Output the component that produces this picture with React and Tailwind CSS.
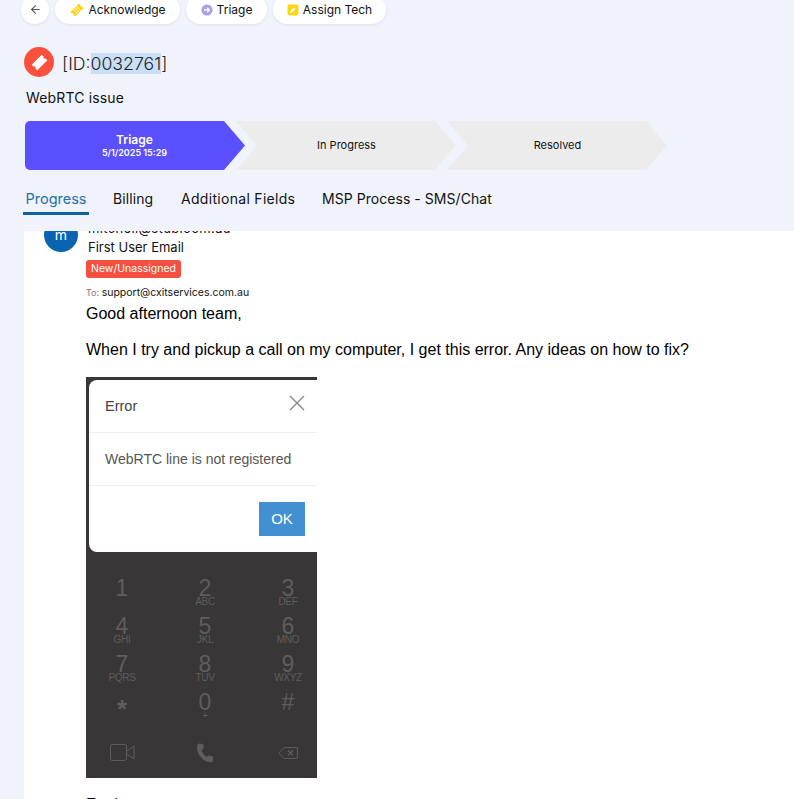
import React from 'react';
import { ArrowLeft, Phone } from 'lucide-react';

const TicketShape = ({ className, stripes }) => (
  <svg viewBox="0 0 24 24" className={className}>
    <g transform="rotate(-45 12 12)">
      <path
        fill="currentColor"
        d="M3 7h18v3.2a1.9 1.9 0 0 0 0 3.6V17H3v-3.2a1.9 1.9 0 0 0 0-3.6z"
      />
      {stripes && (
        <path d="M9 7v10M12 7v10M15 7v10" stroke="#fff" strokeWidth="1" fill="none" />
      )}
    </g>
  </svg>
);

const TriageIcon = () => (
  <svg viewBox="0 0 12 12" className="w-[12px] h-[12px]">
    <circle cx="6" cy="6" r="5.6" fill="#a99ff0" />
    <path d="M3 6h5.4M6.2 3.8 8.4 6 6.2 8.2" stroke="#fff" strokeWidth="1.3" fill="none" />
  </svg>
);

const PencilIcon = () => (
  <svg viewBox="0 0 12 12" className="w-[12px] h-[12px]">
    <rect x="0.5" y="0.5" width="11" height="11" rx="2" fill="#fdd60f" />
    <path d="M3 9l.5-2 3.6-3.6 1.5 1.5L5 8.5z" fill="#fff" />
  </svg>
);

const actions = [
  { label: 'Acknowledge', icon: <TicketShape className="w-[16px] h-[16px] text-[#fbd51d]" stripes />, width: 'w-[125px]', gap: 'gap-[3px]' },
  { label: 'Triage', icon: <TriageIcon />, width: 'w-[81px]', gap: 'gap-[4px]' },
  { label: 'Assign Tech', icon: <PencilIcon />, width: 'w-[113px]', gap: 'gap-[4px]' },
];

const steps = [
  { label: 'In Progress' },
  { label: 'Resolved' },
];

const tabs = [
  { label: 'Additional Fields', width: 'w-[114px]', spacing: 'tracking-[0.3px]' },
  { label: 'MSP Process - SMS/Chat', width: 'w-[171px]', spacing: 'tracking-[0.05px]' },
];

const keys = [
  ['1', ''], ['2', 'ABC'], ['3', 'DEF'],
  ['4', 'GHI'], ['5', 'JKL'], ['6', 'MNO'],
  ['7', 'PQRS'], ['8', 'TUV'], ['9', 'WXYZ'],
  ['*', ''], ['0', '+'], ['#', ''],
];

function ErrorShot() {
  return (
    <div className="w-[231px] h-[401px] bg-[#383636] pt-[3px] overflow-hidden font-['Liberation_Sans',sans-serif]">
      {/* error dialog, cropped on the right like the source image */}
      <div className="ml-[3px] w-[228px] h-[172px] bg-white rounded-l-[8px] text-[#444]">
        <div className="h-[53px] border-b border-[#eeeeee] pl-[16px] pr-[12px] flex items-center justify-between">
          <span className="text-[14.5px] mt-[-1px]">Error</span>
          <svg viewBox="0 0 16 16" className="w-[16px] h-[16px] mb-[6px]">
            <path d="M1 1l14 14M15 1 1 15" stroke="#888" strokeWidth="1.4" fill="none" />
          </svg>
        </div>
        <div className="h-[53px] border-b border-[#eeeeee] pl-[16px] flex items-center text-[14px] text-[#555]">
          WebRTC line is not registered
        </div>
        <div className="flex justify-end pt-[16px] pr-[12px]">
          <div className="w-[46px] h-[34px] bg-[#428fd1] text-white text-[15px] flex items-center justify-center">OK</div>
        </div>
      </div>

      {/* dial pad */}
      <div className="grid grid-cols-[60px_60px_60px] gap-x-[23px] auto-rows-[38px] pl-[6px] mt-[24px] text-[#5f5d5d] text-center">
        {keys.map(([digit, letters]) => (
          <div key={digit}>
            <div className={digit === '*' ? 'text-[26px] leading-[24px] font-bold mt-[7px]' : 'text-[23px] leading-[24px]'}>{digit}</div>
            <div className="text-[10px] leading-[12px] mt-[-4px] tracking-[-0.3px]">{letters}</div>
          </div>
        ))}
      </div>
      <div className="grid grid-cols-[60px_60px_60px] gap-x-[23px] pl-[6px] mt-[15px] text-[#5f5d5d]">
        <div className="flex justify-center pt-[1px]">
          <svg viewBox="0 0 25 17" className="w-[25px] h-[17px]" fill="none" stroke="currentColor" strokeWidth="1">
            <rect x="0.5" y="0.5" width="16" height="16" rx="2" />
            <path d="M17 7l7-5v13l-7-5" />
          </svg>
        </div>
        <div className="flex justify-center">
          <Phone className="w-[20px] h-[20px] rotate-[6deg]" fill="currentColor" strokeWidth={1} />
        </div>
        <div className="flex justify-center pt-[4px]">
          <svg viewBox="0 0 20 12" className="w-[20px] h-[12px]" fill="none" stroke="currentColor">
            <path d="M6 .6h13.4v10.8H6L.8 6z" />
            <path d="M10 3.5l5 5M15 3.5l-5 5" strokeWidth="1.3" />
          </svg>
        </div>
      </div>
    </div>
  );
}

export default function App() {
  return (
    <div className="h-[799px] overflow-hidden bg-[#f0f3fb] font-['Inter',sans-serif] text-[#111]">
      <div className="h-[231px] overflow-hidden">
        {/* Action bar */}
        <div className="flex items-center gap-[6px] pl-[21px] mt-[-5px] h-[29px]">
          <button className="w-[28px] h-[28px] rounded-full bg-white shadow-[0_1px_3px_rgba(0,0,0,0.08)] flex items-center justify-center text-[#555]">
            <ArrowLeft className="w-[13px] h-[13px]" />
          </button>
          {actions.map(({ label, icon, width, gap }) => (
            <button
              key={label}
              className={`${width} ${gap} h-[29px] rounded-full bg-white shadow-[0_1px_3px_rgba(0,0,0,0.08)] flex items-center justify-center text-[12px]`}
            >
              {icon}
              <span>{label}</span>
            </button>
          ))}
        </div>

        {/* Title */}
        <div className="flex items-center gap-[8px] ml-[24px] mt-[23px]">
          <div className="w-[30px] h-[30px] rounded-full bg-[#fa503d] flex items-center justify-center text-white">
            <TicketShape className="w-[19px] h-[19px]" />
          </div>
          <div className="text-[17.7px] leading-[22px] mt-[4px] text-[#222] font-light whitespace-nowrap">
            [ID:<span className="bg-[#c9dff8]">0032761</span>]
          </div>
        </div>
        <div className="ml-[26px] mt-[12px] text-[14px] leading-[18px] tracking-[0.15px]">WebRTC issue</div>

        {/* Status steps */}
        <div className="flex ml-[25px] mt-[14px]">
          <div className="w-[220px] h-[49px] bg-[#5a50ff] text-white rounded-l-[5px] [clip-path:polygon(0_0,199px_0,100%_50%,199px_100%,0_100%)] flex flex-col items-center justify-center font-semibold pr-[1px]">
            <span className="text-[12px] leading-[14px]">Triage</span>
            <span className="text-[9px] leading-[12px]">5/1/2025 15:29</span>
          </div>
          {steps.map(({ label }) => (
            <div
              key={label}
              className="w-[220px] h-[49px] ml-[-9px] bg-[#ececec] text-[11px] [clip-path:polygon(0_0,199px_0,100%_50%,199px_100%,0_100%,21px_50%)] flex items-center justify-center pl-[1px]"
            >
              {label}
            </div>
          ))}
        </div>

        {/* Tabs */}
        <div className="flex items-start ml-[23px] mt-[19px] text-[14px] leading-[20px]">
          <div className="w-[66px] h-[26px] border-b-[3px] border-[#0f60a0] text-[#1f70a8] text-center text-[14.5px]">Progress</div>
          <div className="ml-[24px] w-[41px] tracking-[0.1px]">Billing</div>
          {tabs.map(({ label, width, spacing }) => (
            <div key={label} className={`${width} ${spacing} ml-[27px] whitespace-nowrap`}>{label}</div>
          ))}
        </div>
      </div>

      {/* Message panel, scrolled so its first line is clipped */}
      <div className="ml-[24px] h-[568px] bg-white overflow-hidden">
        <div className="flex mt-[-13px] ml-[20px] gap-[8px]">
          <div className="w-[34px] h-[34px] rounded-full bg-[#0a64b0] text-white text-[14px] flex items-center justify-center shrink-0 pb-[2px]">m</div>
          <div className="min-w-0">
            <div className="ml-[2px] text-[13px] leading-[18px] mt-[1px] tracking-[0.35px]">mitchell@stubloom.au</div>
            <div className="ml-[2px] text-[13px] leading-[18px] mt-[1px]">First User Email</div>
            <div className="w-[95px] h-[18px] mt-[4px] rounded-[3px] bg-[#f44f3f] text-white text-[10.5px] flex items-center justify-center">New/Unassigned</div>
            <div className="mt-[8px] text-[10.5px] leading-[14px] whitespace-nowrap">
              <span className="text-[9px] text-[#8a6f6f]">To: </span>support@cxitservices.com.au
            </div>
          </div>
        </div>
        <div className="ml-[62px] mt-[5px] text-[16px] leading-[18px] text-black font-['Liberation_Sans',sans-serif]">
          <p>Good afternoon team,</p>
          <p className="mt-[18px]">When I try and pickup a call on my computer, I get this error. Any ideas on how to fix?</p>
          <div className="mt-[18px]">
            <ErrorShot />
          </div>
          <p className="mt-[18px]">For issues</p>
        </div>
      </div>
    </div>
  );
}
